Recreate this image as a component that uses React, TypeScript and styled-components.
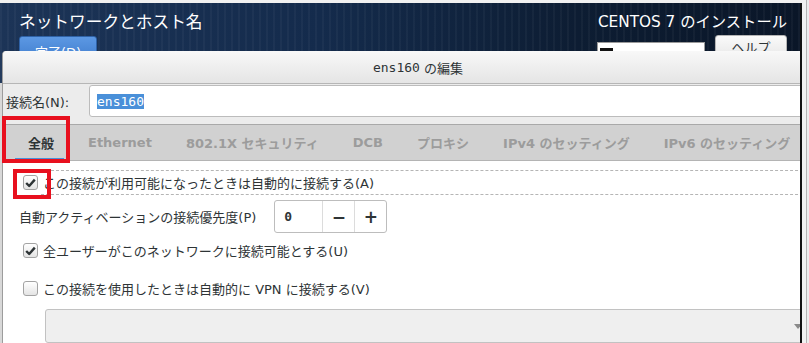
import styled, { createGlobalStyle } from "styled-components";

const GlobalStyle = createGlobalStyle`
  html, body {
    margin: 0;
    padding: 0;
    background: #f1f1f1;
    overflow: hidden;
  }
  body {
    font-family: "DejaVu Sans", "Noto Sans CJK JP", sans-serif;
    color: #2e3436;
  }
`;

const Page = styled.div`
  display: flex;
  width: 809px;
  height: 343px;
`;

const Screen = styled.div`
  position: relative;
  margin-top: 3px;
  width: 800px;
  height: 340px;
  flex: 0 0 800px;
  overflow: hidden;
  background: #d8d8d8;
  border-right: 2px solid #121212;
`;

const Frame = styled.div`
  flex: 1;
  margin-left: 4px;
  border-left: 1px solid #b4b4b4;
  background: #ededed;
`;

/* installer header behind the dialog */
const Header = styled.header`
  height: 80px;
  display: flex;
  justify-content: space-between;
  padding: 9px 13px 0 19px;
  box-sizing: border-box;
  background: repeating-linear-gradient(
      90deg,
      rgba(255, 255, 255, 0.035) 0 2px,
      transparent 2px 7px
    ),
    linear-gradient(90deg, #1c3457 0%, #142b4c 40%, #0d1d33 72%, #0a1628 100%);
`;

const HeaderLeft = styled.div`
  display: flex;
  flex-direction: column;
`;

const HeaderRight = styled.div`
  display: flex;
  flex-direction: column;
  align-items: flex-end;
`;

const PageTitle = styled.h1`
  margin: 0;
  font-size: 16.7px;
  line-height: 20px;
  font-weight: normal;
  color: #ffffff;
`;

const Product = styled.div`
  font-size: 15.3px;
  line-height: 20px;
  color: #ffffff;
`;

const DoneButton = styled.button`
  margin-top: 4px;
  width: 78px;
  height: 30px;
  border: 1px solid #2f62a6;
  border-radius: 3px;
  background: linear-gradient(#5c98e3, #3b78c9);
  color: #ffffff;
  font: inherit;
  font-size: 13px;
`;

const HeaderTools = styled.div`
  display: flex;
  align-items: flex-start;
  gap: 10px;
  margin-top: 3px;
`;

const LayoutBox = styled.div`
  margin-top: 7px;
  width: 108px;
  height: 30px;
  box-sizing: border-box;
  background: #ffffff;
  border: 1px solid #9a9a9a;
  padding: 5px 0 0 2px;
`;

const LayoutMark = styled.span`
  display: block;
  width: 13px;
  height: 3px;
  background: #111;
`;

const HelpButton = styled.button`
  width: 72px;
  height: 30px;
  border: 1px solid #b5b5b5;
  border-radius: 3px;
  background: linear-gradient(#fafafa, #e2e2e2);
  color: #2e3436;
  font: inherit;
  font-size: 13px;
`;

/* edit dialog */
const Dialog = styled.section`
  position: absolute;
  top: 48px;
  left: 2px;
  width: 830px;
  bottom: 0;
  background: #ececec;
  border-left: 1px solid #9c9c9c;
  border-radius: 4px 0 0 0;
  display: flex;
  flex-direction: column;
`;

const TitleBar = styled.div`
  height: 32px;
  flex: 0 0 32px;
  display: flex;
  align-items: center;
  justify-content: center;
  font-size: 13px;
  background: linear-gradient(#f8f8f8, #e5e5e5);
  border-bottom: 1px solid #b6b6b6;
  border-radius: 4px 0 0 0;
`;

const Mono = styled.span`
  font-family: "DejaVu Sans Mono", monospace;
`;

const NameRow = styled.div`
  display: flex;
  align-items: center;
  margin-top: 1px;
  padding-left: 3px;
  height: 32px;
`;

const FieldLabel = styled.label`
  flex: 0 0 83px;
  font-size: 13px;
`;

const PriorityLabel = styled.span`
  font-size: 13px;
`;

const NameInput = styled.div`
  flex: 1;
  height: 32px;
  box-sizing: border-box;
  margin-right: 10px;
  background: #ffffff;
  border: 1px solid #bcbcbc;
  border-radius: 3px;
  display: flex;
  align-items: center;
  padding-left: 7px;
`;

const Selected = styled(Mono)`
  font-size: 13px;
  background: #4a90d9;
  color: #ffffff;
  line-height: 15px;
`;

const TabBar = styled.nav`
  margin-top: 7px;
  height: 37px;
  display: flex;
  gap: 8px;
  padding-left: 12px;
  background: #d1d1d1;
  border-top: 1px solid #a9a9a9;
  border-bottom: 1px solid #b4b4b4;
  white-space: nowrap;
`;

const Tab = styled.div<{ $active?: boolean }>`
  position: relative;
  display: flex;
  align-items: center;
  padding: 0 13px;
  font-size: 13px;
  font-weight: bold;
  color: ${(p) => (p.$active ? "#2e3436" : "#9c9c9c")};
  &::after {
    content: "";
    display: ${(p) => (p.$active ? "block" : "none")};
    position: absolute;
    left: 0;
    right: 3px;
    bottom: 0;
    height: 2px;
    background: #4a90d9;
  }
`;

const Content = styled.div`
  flex: 1;
  background: #ffffff;
  padding-top: 9px;
  display: flex;
  flex-direction: column;
`;

const CheckRow = styled.div<{ $gap: number }>`
  display: flex;
  align-items: center;
  height: 25px;
  margin-top: ${(p) => p.$gap}px;
  padding-left: 20px;
`;

const Box = styled.span`
  flex: 0 0 15px;
  width: 15px;
  height: 15px;
  box-sizing: border-box;
  border: 1px solid #a3a3a3;
  border-radius: 3px;
  background: linear-gradient(#ffffff, #e4e4e4);
  display: flex;
  align-items: center;
  justify-content: center;
  margin-right: 3px;
`;

const CheckLabel = styled.span<{ $focus?: boolean }>`
  flex: 1;
  align-self: stretch;
  display: flex;
  align-items: center;
  padding-left: 2px;
  font-size: 13px;
  border-top: 1px dashed ${(p) => (p.$focus ? "#b5b5b5" : "transparent")};
  border-bottom: 1px dashed ${(p) => (p.$focus ? "#b5b5b5" : "transparent")};
  white-space: nowrap;
`;

const PriorityRow = styled.div`
  display: flex;
  align-items: center;
  gap: 18px;
  margin-top: 5px;
  padding-left: 16px;
  height: 33px;
`;

const Spin = styled.div`
  display: flex;
  width: 113px;
  height: 33px;
  box-sizing: border-box;
  border: 1px solid #bdbdbd;
  border-radius: 3px;
  background: #ffffff;
`;

const SpinValue = styled(Mono)`
  flex: 0 0 47px;
  display: flex;
  align-items: center;
  padding-left: 9px;
  box-sizing: border-box;
  font-size: 13px;
  font-weight: bold;
`;

const SpinButton = styled.span`
  flex: 1;
  display: flex;
  align-items: center;
  justify-content: center;
  border-left: 1px solid #dcdcdc;
  font-size: 17px;
  font-weight: bold;
  color: #2e3436;
`;

const Combo = styled.div`
  margin: 8px 20px 0 42px;
  height: 34px;
  box-sizing: border-box;
  background: #efefef;
  border: 1px solid #c2c2c2;
  border-radius: 3px;
  display: flex;
  align-items: center;
  justify-content: flex-end;
  padding-right: 10px;
`;

const Arrow = styled.span`
  width: 0;
  height: 0;
  border-left: 4px solid transparent;
  border-right: 4px solid transparent;
  border-top: 5px solid #8a8a8a;
`;

/* red annotation rectangles laid over the screenshot */
const Mark = styled.div<{ $x: number; $y: number; $w: number; $h: number }>`
  position: absolute;
  left: ${(p) => p.$x}px;
  top: ${(p) => p.$y}px;
  width: ${(p) => p.$w}px;
  height: ${(p) => p.$h}px;
  box-sizing: border-box;
  border: 4px solid #e8101e;
`;

function Check() {
  return (
    <svg width="11" height="10" viewBox="0 0 11 10">
      <polyline
        points="1.2,5 4.2,8 9.8,1.6"
        fill="none"
        stroke="#2e3436"
        strokeWidth="2.4"
        strokeLinejoin="round"
      />
    </svg>
  );
}

function CheckOption({
  checked,
  focus,
  gap,
  label,
}: {
  checked?: boolean;
  focus?: boolean;
  gap: number;
  label: string;
}) {
  return (
    <CheckRow $gap={gap}>
      <Box>{checked && <Check />}</Box>
      <CheckLabel $focus={focus}>{label}</CheckLabel>
    </CheckRow>
  );
}

const tabs = [
  "全般",
  "Ethernet",
  "802.1X セキュリティ",
  "DCB",
  "プロキシ",
  "IPv4 のセッティング",
  "IPv6 のセッティング",
];

export default function App() {
  return (
    <Page>
      <GlobalStyle />
      <Screen>
        <Header>
          <HeaderLeft>
            <PageTitle>ネットワークとホスト名</PageTitle>
            <DoneButton>完了(D)</DoneButton>
          </HeaderLeft>
          <HeaderRight>
            <Product>CENTOS 7 のインストール</Product>
            <HeaderTools>
              <LayoutBox>
                <LayoutMark />
              </LayoutBox>
              <HelpButton>ヘルプ(H)</HelpButton>
            </HeaderTools>
          </HeaderRight>
        </Header>

        <Dialog>
          <TitleBar>
            <Mono>ens160</Mono>&nbsp;の編集
          </TitleBar>
          <NameRow>
            <FieldLabel>接続名(N):</FieldLabel>
            <NameInput>
              <Selected>ens160</Selected>
            </NameInput>
          </NameRow>
          <TabBar>
            {tabs.map((t, i) => (
              <Tab key={t} $active={i === 0}>
                {t}
              </Tab>
            ))}
          </TabBar>
          <Content>
            <CheckOption
              checked
              focus
              gap={0}
              label="この接続が利用可能になったときは自動的に接続する(A)"
            />
            <PriorityRow>
              <PriorityLabel>自動アクティベーションの接続優先度(P)</PriorityLabel>
              <Spin>
                <SpinValue>0</SpinValue>
                <SpinButton>−</SpinButton>
                <SpinButton>+</SpinButton>
              </Spin>
            </PriorityRow>
            <CheckOption
              checked
              gap={5}
              label="全ユーザーがこのネットワークに接続可能とする(U)"
            />
            <CheckOption
              gap={13}
              label="この接続を使用したときは自動的に VPN に接続する(V)"
            />
            <Combo>
              <Arrow />
            </Combo>
          </Content>
        </Dialog>

        <Mark $x={2} $y={113} $w={68} $h={47} />
        <Mark $x={13} $y={166} $w={38} $h={30} />
      </Screen>
      <Frame />
    </Page>
  );
}
